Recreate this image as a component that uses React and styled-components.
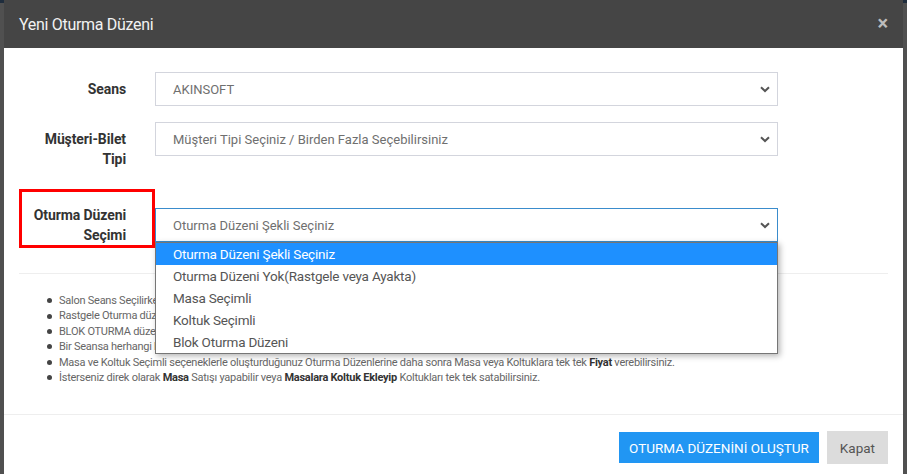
import React from "react";
import styled, { createGlobalStyle } from "styled-components";

const GlobalStyle = createGlobalStyle`
  html, body {
    margin: 0;
    padding: 0;
    height: 100%;
  }
  body {
    background: #4e4e4e;
    font-family: Roboto, "Liberation Sans", sans-serif;
    overflow: hidden;
  }
`;

const options = [
  "Oturma Düzeni Şekli Seçiniz",
  "Oturma Düzeni Yok(Rastgele veya Ayakta)",
  "Masa Seçimli",
  "Koltuk Seçimli",
  "Blok Oturma Düzeni",
];

function Chevron() {
  return (
    <svg width="10" height="7" viewBox="0 0 10 7">
      <path d="M1 1.2 L5 5 L9 1.2" fill="none" stroke="#555" strokeWidth="2" />
    </svg>
  );
}

function App() {
  return (
    <Page>
      <GlobalStyle />
      <Modal>
        <Header>
          <Title>Yeni Oturma Düzeni</Title>
          <Close>×</Close>
        </Header>
        <Body>
          <Row>
            <Label>Seans</Label>
            <Select>
              <span>AKINSOFT</span>
              <Chevron />
            </Select>
          </Row>
          <Row>
            <Label>
              Müşteri-Bilet
              <br />
              Tipi
            </Label>
            <Select>
              <span>Müşteri Tipi Seçiniz / Birden Fazla Seçebilirsiniz</span>
              <Chevron />
            </Select>
          </Row>
          <Row $last>
            <Label $marked>
              Oturma Düzeni
              <br />
              Seçimi
            </Label>
            <SelectWrap>
              <Select $focused>
                <span>Oturma Düzeni Şekli Seçiniz</span>
                <Chevron />
              </Select>
              <OptionList>
                {options.map((o, i) => (
                  <Option key={o} $active={i === 0}>
                    {o}
                  </Option>
                ))}
              </OptionList>
            </SelectWrap>
          </Row>
          <Divider />
          <Notes>
            <li>Salon Seans Seçilirken oluşturulan Oturma Düzeni seçilen salona göre listelenir.</li>
            <li>Rastgele Oturma düzeninde koltuk numarası olmadan satış yapılır.</li>
            <li>BLOK OTURMA düzeninde bloklara göre satış yapılır.</li>
            <li>Bir Seansa herhangi bir oturma düzeni eklenebilir.</li>
            <li>
              Masa ve Koltuk Seçimli seçeneklerle oluşturduğunuz Oturma Düzenlerine daha sonra Masa veya
              Koltuklara tek tek <b>Fiyat</b> verebilirsiniz.
            </li>
            <li>
              İsterseniz direk olarak <b>Masa</b> Satışı yapabilir veya <b>Masalara Koltuk Ekleyip</b>{" "}
              Koltukları tek tek satabilirsiniz.
            </li>
          </Notes>
        </Body>
        <Footer>
          <Button $primary>OTURMA DÜZENİNİ OLUŞTUR</Button>
          <Button>Kapat</Button>
        </Footer>
      </Modal>
    </Page>
  );
}

export default App;

const Page = styled.div`
  height: 474px;
  padding: 0 4px;
  background: linear-gradient(180deg, #1f2d3d 0, #1f2d3d 3px, #505050 3px);
`;

const Modal = styled.div`
  background: #fff;
  height: 474px;
  display: flex;
  flex-direction: column;
`;

const Header = styled.div`
  height: 48px;
  flex-shrink: 0;
  background: #454545;
  display: flex;
  align-items: center;
  justify-content: space-between;
  padding: 0 15px;
  box-sizing: border-box;
`;

const Title = styled.h4`
  margin: 0;
  color: #f2f2f2;
  font-size: 16px;
  font-weight: 400;
  letter-spacing: -0.3px;
`;

const Close = styled.span`
  color: #bdbdbd;
  font-size: 20px;
  font-weight: 700;
  line-height: 1;
  margin-top: -2px;
`;

const Body = styled.div`
  padding: 24px 15px 0;
  height: 366px;
  flex-shrink: 0;
  box-sizing: border-box;
`;

const Row = styled.div`
  display: flex;
  align-items: flex-start;
  margin-bottom: ${(p) => (p.$last ? "25px" : "16px")};
`;

const Label = styled.div`
  width: 136px;
  box-sizing: border-box;
  text-align: right;
  font-size: 14px;
  font-weight: 700;
  color: #333;
  line-height: 20px;
  letter-spacing: -0.1px;
  padding: ${(p) => (p.$marked ? "13px 26px 0 0" : "7px 29px 4px 0")};
  border: ${(p) => (p.$marked ? "3px solid #f00" : "none")};
`;

const SelectWrap = styled.div`
  position: relative;
  margin-top: 19px;
`;

const Select = styled.div`
  width: 623px;
  height: 34px;
  box-sizing: border-box;
  display: flex;
  align-items: center;
  justify-content: space-between;
  padding: 0 7px 0 17px;
  border: 1px solid ${(p) => (p.$focused ? "#3a8ccc" : "#d3d5dd")};
  color: #6f6f6f;
  font-size: 13px;
  letter-spacing: 0;
  background: #fff;
`;

const OptionList = styled.ul`
  position: absolute;
  top: 100%;
  left: 0;
  width: 623px;
  box-sizing: border-box;
  margin: 0;
  padding: 0;
  list-style: none;
  background: #fff;
  border: 1px solid #767676;
  box-shadow: 2px 2px 6px rgba(0, 0, 0, 0.3);
  z-index: 5;
`;

const Option = styled.li`
  height: 22px;
  line-height: 22px;
  padding-left: 17px;
  font-size: 13.5px;
  letter-spacing: -0.2px;
  color: ${(p) => (p.$active ? "#fff" : "#555")};
  background: ${(p) => (p.$active ? "#1e90ff" : "transparent")};
`;

const Divider = styled.hr`
  border: 0;
  border-top: 1px solid #eee;
  margin: 0;
`;

const Notes = styled.ul`
  margin: 19px 0 0;
  padding-left: 40px;
  font-size: 11px;
  line-height: 15.4px;
  letter-spacing: -0.25px;
  color: #666;
  list-style: none;

  li::before {
    content: "";
    display: inline-block;
    width: 5px;
    height: 5px;
    border-radius: 50%;
    background: #444;
    margin: 0 7px 1px -12px;
    vertical-align: middle;
  }

  b {
    color: #333;
  }
`;

const Footer = styled.div`
  border-top: 1px solid #eee;
  display: flex;
  justify-content: flex-end;
  align-items: center;
  gap: 8px;
  padding: 16px 15px;
`;

const Button = styled.button`
  border: 0;
  font-family: Roboto, "Liberation Sans", sans-serif;
  font-size: 13.5px;
  letter-spacing: 0;
  height: ${(p) => (p.$primary ? "31px" : "33px")};
  padding: ${(p) => (p.$primary ? "0 10px" : "0 13px")};
  color: ${(p) => (p.$primary ? "#fff" : "#555")};
  background: ${(p) => (p.$primary ? "#2196f3" : "#dcdcdc")};
`;
